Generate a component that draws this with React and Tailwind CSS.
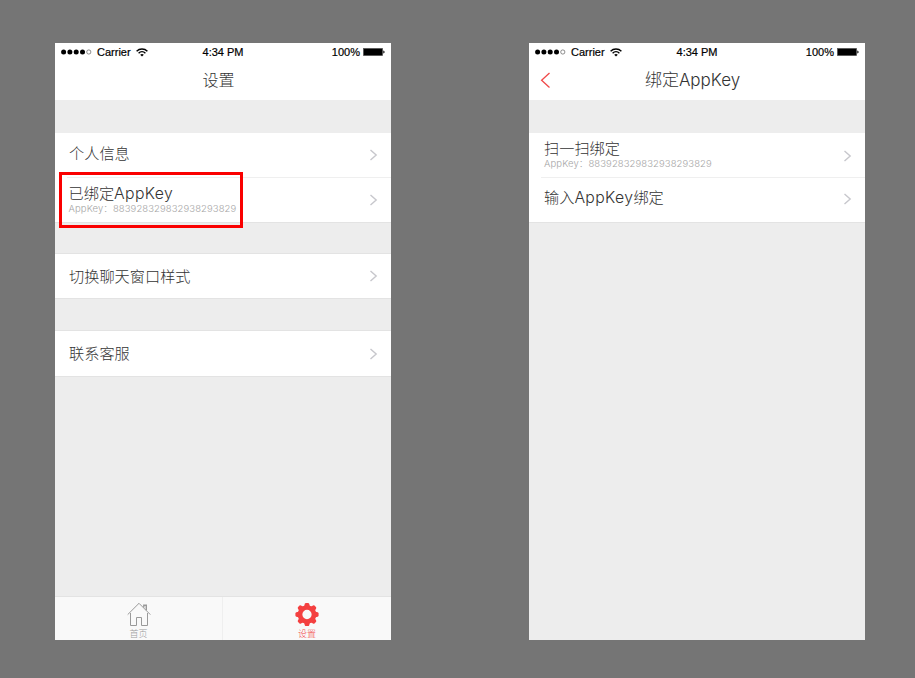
import React from "react";

const cjk = "font-['Inter','Noto_Sans_CJK_SC',sans-serif]";

function StatusBar() {
  return (
    <div className="relative flex h-[18px] items-center pl-[6px] pr-[6px] font-['Liberation_Sans',sans-serif] text-[11px] leading-[18px] text-black [-webkit-text-stroke:0.2px_black]">
      <svg className="h-[6px] w-[31px]" viewBox="0 0 31 6">
        <circle cx="2.6" cy="3" r="2.5" />
        <circle cx="8.9" cy="3" r="2.5" />
        <circle cx="15.2" cy="3" r="2.5" />
        <circle cx="21.5" cy="3" r="2.5" />
        <circle cx="27.8" cy="3" r="2.1" fill="none" stroke="#444" strokeWidth="0.6" />
      </svg>
      <span className="ml-[5px] w-[34px] whitespace-nowrap">Carrier</span>
      <svg className="ml-[5px] h-[9px] w-[12px]" viewBox="0 0 12 9" fill="none" stroke="black" strokeWidth="1.4">
        <path d="M0.6 3.2C3.6 .2 8.4 .2 11.4 3.2" />
        <path d="M2.6 5.2C4.5 3.3 7.5 3.3 9.4 5.2" />
        <path d="M4.2 6.7Q6 5.2 7.8 6.7L6 8.6Z" fill="black" stroke="none" />
      </svg>
      <span className="absolute inset-x-0 text-center">4:34 PM</span>
      <span className="ml-auto">100%</span>
      <svg className="ml-[3px] h-[8px] w-[22px]" viewBox="0 0 22 8">
        <rect x="0.4" y="0.4" width="19.2" height="7.2" fill="black" stroke="#555" strokeWidth="0.6" />
        <path d="M20.3 2.5Q21.6 2.7 21.6 4T20.3 5.5Z" />
      </svg>
    </div>
  );
}

function Header({ title, back, className }) {
  return (
    <header className="h-[57px] shrink-0 bg-white">
      <StatusBar />
      <div className="grid h-[38px] grid-cols-[12px_1fr_21px] items-center px-[10px]">
        {back ? (
          <svg className="h-[16px] w-[12px]" viewBox="0 0 12 16" fill="none" stroke="#f04848" strokeWidth="1.3">
            <path d="M10.5 .9L2.6 8.2L10.5 15.5" />
          </svg>
        ) : <span />}
        <h1 className={"whitespace-nowrap text-center font-light text-[#333] " + className}>{title}</h1>
      </div>
    </header>
  );
}

function Chevron({ className = "" }) {
  return (
    <svg className={"ml-auto h-[12px] w-[9px] shrink-0 " + className} viewBox="0 0 9 12" fill="none" stroke="#c7c7cc" strokeWidth="1.4">
      <path d="M1.5 .9L7.2 6L1.5 11.1" />
    </svg>
  );
}

function Row({ label, sub, className = "", labelClass = "", chevronClass }) {
  return (
    <div className={"flex items-center bg-white pr-[13px] " + className}>
      <div className="flex flex-col whitespace-nowrap">
        <span className={"text-[15.2px] font-light leading-[18px] text-[#333] " + labelClass}>{label}</span>
        {sub && <span className="text-[9.5px] font-light leading-[12px] tracking-[0.1px] text-[#a6a6a6]">AppKey：883928329832938293829</span>}
      </div>
      <Chevron className={chevronClass} />
    </div>
  );
}

const appKey = <span className="text-[15.8px] tracking-[0.35px]">AppKey</span>;
const teeth = [0, 45, 90, 135, 180, 225, 270, 315];

export default function App() {
  return (
    <main className={"flex h-[678px] w-[915px] gap-[138px] bg-[#757575] pl-[55px] pt-[43px] " + cjk}>
      <section className="relative flex h-[597px] w-[336px] flex-col bg-[#ededed]">
        <Header title="设置" className="text-[16px] leading-[20px]" />
        <div className="mt-[33px] border-b border-[#e3e3e3] bg-white">
          <Row label="个人信息" className="h-[44px] pl-[14px]" labelClass="-translate-y-[1px]" />
          <div className="ml-[12px] h-px bg-[#efefef]" />
          <Row label={<>已绑定{appKey}</>} sub className="h-[44px] pl-[13.5px]" />
        </div>
        <div className="mt-[30px] border-y border-[#e3e3e3] bg-white">
          <Row label="切换聊天窗口样式" className="h-[44px] pl-[14px]" labelClass="translate-y-[1px]" />
        </div>
        <div className="mt-[31px] border-y border-[#e3e3e3] bg-white">
          <Row label="联系客服" className="h-[45px] pl-[14px]" />
        </div>
        <nav className="mt-auto grid h-[44px] grid-cols-2 border-t border-[#e3e3e3] bg-[#f9f9f9]">
          <div className="flex flex-col items-center border-r border-[#efefef] pt-[5px] text-[#999]">
            <svg className="h-[25px] w-[24px]" viewBox="0 0 24 25" fill="none" stroke="#999" strokeWidth="1">
              <path d="M.7 12.6L12 1.3L23.3 12.6" />
              <path d="M3.5 11V23.5H9.5V15.5H14.5V23.5H20.5V11" />
              <path d="M16.8 5.5V3.2H19.3V8.2" strokeWidth="1.4" />
            </svg>
            <span className="text-[9px] font-light leading-[13px]">首页</span>
          </div>
          <div className="flex flex-col items-center pt-[5px] text-[#f23d3d]">
            <svg className="h-[25px] w-[24px]" viewBox="0 0 24 25" fill="#f44040">
              {teeth.map((a) => (
                <path key={a} transform={`rotate(${a} 12 12.5)`} d="M8.9 5L9.8 1.8Q10.1 .9 11 .9H13Q13.9 .9 14.2 1.8L15.1 5Z" />
              ))}
              <circle cx="12" cy="12.5" r="7" fill="none" stroke="#f44040" strokeWidth="4.7" />
            </svg>
            <span className="text-[9px] font-light leading-[13px]">设置</span>
          </div>
        </nav>
        <div className="absolute left-[4px] top-[129px] h-[56px] w-[184px] border-[3px] border-[#fa0000]" />
      </section>

      <section className="flex h-[597px] w-[336px] flex-col bg-[#ededed]">
        <Header title="绑定AppKey" back className="text-[17px] leading-[20px]" />
        <div className="mt-[33px] border-b border-[#e3e3e3] bg-white">
          <Row label="扫一扫绑定" sub className="h-[44px] pl-[15px]" chevronClass="translate-y-[1px]" />
          <div className="ml-[12px] h-px bg-[#efefef]" />
          <Row label={<>输入{appKey}绑定</>} className="h-[44px] pl-[15px]" labelClass="-translate-y-[2px]" chevronClass="-translate-y-[1px]" />
        </div>
      </section>
    </main>
  );
}
